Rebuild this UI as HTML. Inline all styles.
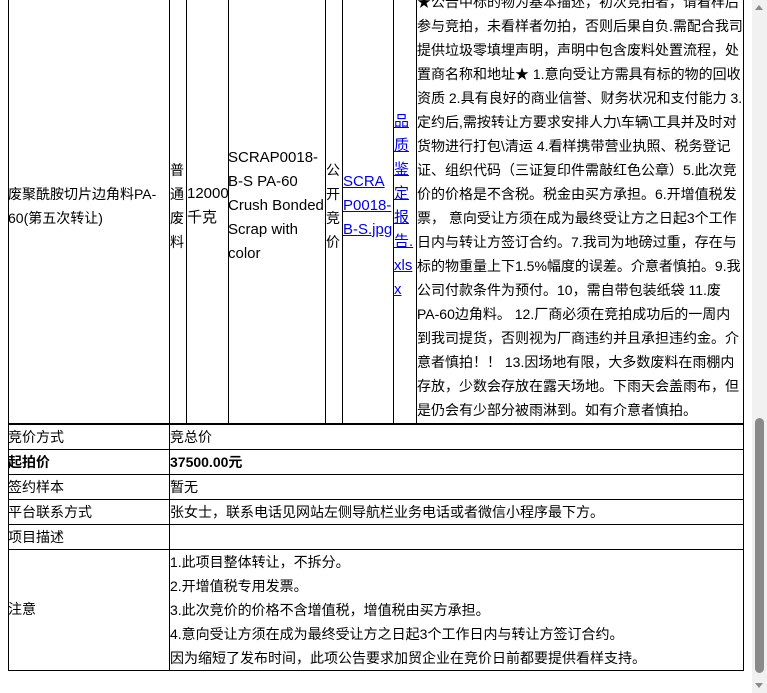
<!DOCTYPE html>
<html><head><meta charset="utf-8"><style>
*{margin:0;padding:0;box-sizing:border-box}
html,body{width:767px;height:693px;overflow:hidden;background:#fff}
body{font-family:"Liberation Sans","Noto Sans CJK SC",sans-serif;font-size:14px;color:#000;position:relative}
.c{position:absolute;display:flex;align-items:center;line-height:24px;overflow:hidden;white-space:nowrap}
.v{position:absolute;background:#000;width:1px}
.h{position:absolute;background:#000;height:1px}
a{color:#00e;text-decoration:underline}
.t{position:absolute;left:170px;font-size:14px;line-height:24px;white-space:nowrap}
.l{position:absolute;left:8px;line-height:24px}
.w{font-size:15px}
</style></head><body>
<!-- upper row -->
<div class="c" style="left:8px;top:-12px;width:160px;height:435px">废聚酰胺切片边角料PA-<br>60(第五次转让)</div>
<div class="c" style="left:170px;top:-12px;width:16px;height:435px">普<br>通<br>废<br>料</div>
<div class="c w" style="left:187px;top:-12px;width:41px;height:435px">12000<br>千克</div>
<div class="c w" style="left:228px;top:-12px;width:97px;height:435px">SCRAP0018-<br>B-S PA-60<br>Crush Bonded<br>Scrap with<br>color</div>
<div class="c" style="left:326px;top:-12px;width:16px;height:435px">公<br>开<br>竞<br>价</div>
<div class="c w" style="left:343px;top:-12px;width:50px;height:435px"><a>SCRA<br>P0018-<br>B-S.jpg</a></div>
<div class="c w" style="left:394px;top:-12px;width:22px;height:435px"><a>品<br>质<br>鉴<br>定<br>报<br>告.<br>xls<br>x</a></div>
<div class="c" style="left:417px;top:-12px;width:327px;height:435px">★公告中标的物为基本描述，初次竞拍者，请看样后<br>参与竞拍，未看样者勿拍，否则后果自负.需配合我司<br>提供垃圾零填埋声明，声明中包含废料处置流程，处<br>置商名称和地址★ 1.意向受让方需具有标的物的回收<br>资质 2.具有良好的商业信誉、财务状况和支付能力 3.<br>定约后,需按转让方要求安排人力\车辆\工具并及时对<br>货物进行打包\清运 4.看样携带营业执照、税务登记<br>证、组织代码（三证复印件需敲红色公章）5.此次竞<br>价的价格是不含税。税金由买方承担。6.开增值税发<br>票， 意向受让方须在成为最终受让方之日起3个工作<br>日内与转让方签订合约。7.我司为地磅过重，存在与<br>标的物重量上下1.5%幅度的误差。介意者慎拍。9.我<br>公司付款条件为预付。10，需自带包装纸袋 11.废<br>PA-60边角料。 12.厂商必须在竞拍成功后的一周内<br>到我司提货，否则视为厂商违约并且承担违约金。介<br>意者慎拍！！ 13.因场地有限，大多数废料在雨棚内<br>存放，少数会存放在露天场地。下雨天会盖雨布，但<br>是仍会有少部分被雨淋到。如有介意者慎拍。</div>
<div class="v" style="left:8px;top:0;height:424px"></div>
<div class="v" style="left:169px;top:0;height:424px"></div>
<div class="v" style="left:186px;top:0;height:424px"></div>
<div class="v" style="left:228px;top:0;height:424px"></div>
<div class="v" style="left:325px;top:0;height:424px"></div>
<div class="v" style="left:342px;top:0;height:424px"></div>
<div class="v" style="left:393px;top:0;height:424px"></div>
<div class="v" style="left:416px;top:0;height:424px"></div>
<div class="v" style="left:743px;top:0;height:424px"></div>
<div class="h" style="left:8px;top:423px;width:736px;height:2px"></div>
<!-- lower table -->
<div class="v" style="left:8px;top:424px;height:247px"></div>
<div class="v" style="left:169px;top:424px;height:247px"></div>
<div class="v" style="left:743px;top:424px;height:247px"></div>
<div class="h" style="left:8px;top:449px;width:736px"></div>
<div class="h" style="left:8px;top:474px;width:736px"></div>
<div class="h" style="left:8px;top:499px;width:736px"></div>
<div class="h" style="left:8px;top:524px;width:736px"></div>
<div class="h" style="left:8px;top:549px;width:736px"></div>
<div class="h" style="left:8px;top:670px;width:736px"></div>
<div class="l" style="top:425px">竞价方式</div><div class="t" style="top:425px">竞总价</div>
<div class="l" style="top:450px;font-weight:bold">起拍价</div><div class="t" style="top:450px;font-weight:bold">37500.00元</div>
<div class="l" style="top:475px">签约样本</div><div class="t" style="top:475px">暂无</div>
<div class="l" style="top:500px">平台联系方式</div><div class="t" style="top:500px">张女士，联系电话见网站左侧导航栏业务电话或者微信小程序最下方。</div>
<div class="l" style="top:525px">项目描述</div>
<div class="l" style="top:597px">注意</div>
<div class="t" style="top:550px">1.此项目整体转让，不拆分。<br>2.开增值税专用发票。<br>3.此次竞价的价格不含增值税，增值税由买方承担。<br>4.意向受让方须在成为最终受让方之日起3个工作日内与转让方签订合约。<br>因为缩短了发布时间，此项公告要求加贸企业在竞价日前都要提供看样支持。</div>
<!-- scrollbar -->
<div style="position:absolute;left:752px;top:0;width:15px;height:693px;background:#f1f1f1"></div>
<div style="position:absolute;left:755px;top:418px;width:9px;height:255px;background:#8a8a8a;border-radius:5px"></div>
<div style="position:absolute;left:755px;top:5px;width:0;height:0;border-left:4.5px solid transparent;border-right:4.5px solid transparent;border-bottom:5px solid #8a8a8a"></div>
<div style="position:absolute;left:755px;top:683px;width:0;height:0;border-left:4.5px solid transparent;border-right:4.5px solid transparent;border-top:5px solid #8a8a8a"></div>
</body></html>
